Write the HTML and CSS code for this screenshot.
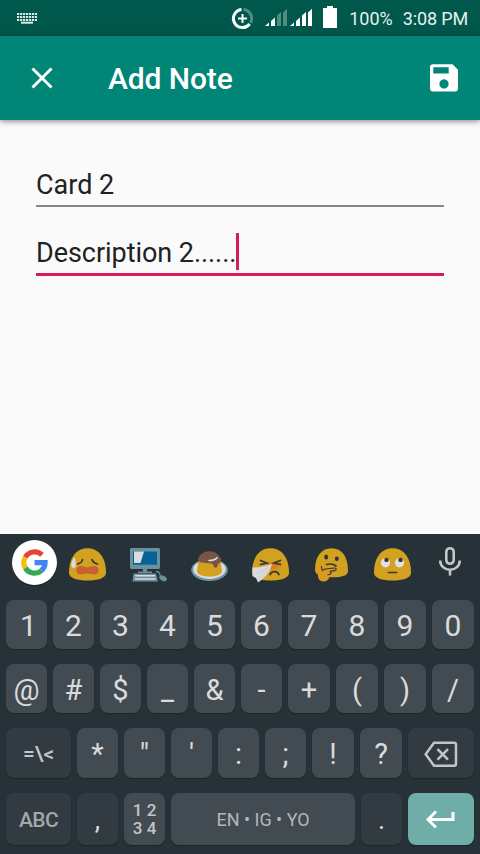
FILE: index.html
```html
<!DOCTYPE html>
<html lang="en">
<head>
<meta charset="utf-8">
<title>Add Note</title>
<link rel="stylesheet" href="styles.css">
</head>
<body>
<div class="screen">
  <div class="status">
    <svg class="status-kbd" width="24" height="14" viewBox="15 11 24 14">
      <path d="M17 14h20M17 17h20M17 20h20" stroke="#dcebe8" stroke-width="2" stroke-dasharray="2.2 .8"/>
      <path d="M21 22.700h12" stroke="#dcebe8" stroke-width="2"/>
    </svg>
    <svg class="status-icons" width="110" height="36" viewBox="230 0 110 36">
      <g fill="none" stroke-width="3">
        <path d="M243.500 9.600A9 9 0 0 1 250.600 22.800" stroke="#4f8d83"/>
        <path d="M241.500 9.600A9 9 0 1 0 249.600 24" stroke="#fff"/>
        <path d="M238 18.500h9M242.500 14v9" stroke="#fff" stroke-width="2"/>
      </g>
      <path fill="#fff" d="M265 26l4-3.500v3.500zM271 26v-5l4-3.500v8.500z"/>
      <path fill="#4f8d83" d="M277 26V15.500l4-3.500v14zM283 26V12.500l4-3.800V26z"/>
      <path fill="#fff" d="M290 26l4-3.500v3.500zM296 26v-5l4-3.500v8.500zM302 26V15.500l4-3.500v14zM308 26V12.500l4-3.800V26z"/>
      <path fill="#fff" d="M323 8h4V6h6v2h4v20h-14z"/>
    </svg>
    <span class="battery">100%</span>
    <span class="clock">3:08 PM</span>
  </div>
  <header class="bar">
    <svg width="22" height="22" viewBox="31 67 22 22"><path d="M32.500 68.500l19 19M51.500 68.500l-19 19" stroke="#fff" stroke-width="2.900"/></svg>
    <h1>Add Note</h1>
    <svg width="28" height="28" viewBox="430 64 28 28"><path fill="#fff" fill-rule="evenodd" d="M433 64.300h19.500l5.500 5.500V88.500a3 3 0 0 1-3 3H433a3 3 0 0 1-3-3V67.300a3 3 0 0 1 3-3zM433.300 67.300v6.200h15.400v-6.200zM444 79.300a4.600 4.600 0 1 0 .01 0z"/></svg>
  </header>
  <main class="form">
    <div class="field">Card 2</div>
    <div class="field active"><span>Description 2......</span><i class="caret"></i></div>
  </main>
  <section class="keyboard">
    <div class="strip">
      <svg width="64" height="66" viewBox="0 534 64 66">
        <ellipse cx="34.500" cy="564" rx="22.500" ry="22.500" fill="#182024" opacity=".6"/>
        <circle cx="34.500" cy="562.500" r="22.500" fill="#fff"/>
        <g fill="none" stroke-width="5.200">
          <path d="M25.300 557.300A10.600 10.600 0 0 1 42 554.900" stroke="#ea4335"/>
          <path d="M25.300 567.900A10.600 10.600 0 0 1 25.300 557.300" stroke="#fbbc05"/>
          <path d="M41.300 570.700A10.600 10.600 0 0 1 25.300 567.900" stroke="#34a853"/>
          <path d="M34.500 562.700H45.100A10.600 10.600 0 0 1 41.300 570.700" stroke="#4285f4"/>
        </g>
      </svg>
      <svg width="56" height="66" viewBox="64 534 56 66">
        <path class="face" d="M69 573C69 558 76 548.300 87.500 548.300S106 558 106 573C106 578 98 580.500 87.500 580.500S69 578 69 573Z"/>
        <path class="line" d="M77.500 564q4.500-1 5-4.500M92 559.500q1 3.500 5.500 4.500"/>
        <path fill="#c9612f" d="M80.500 566c3 0 4.500 1.200 7 1.200s4-1.200 7-1.200c5.500 0 5.500 8.500 0 8.500-3 0-4.500-1-7-1s-4 1-7 1c-5.500 0-5.500-8.500 0-8.500z"/>
        <path fill="#d8dadb" d="M74.500 557c-2 2.500-3.200 5-3.200 8 0 4 4.500 4 4.600 0 0-3-.4-5.500-1.400-8z"/>
      </svg>
      <svg width="60" height="66" viewBox="120 534 60 66">
        <path fill="#6b919d" d="M131.500 548h27q1.500 0 1.500 1.500v18q0 1.500-1.500 1.500H147v2.500h5v1.500h-14v-1.500h5V569h-11.500q-1.500 0-1.500-1.500v-18q0-1.500 1.500-1.500z"/>
        <path fill="#07629a" d="M133 551.500h24v13.200h-24z"/>
        <path fill="#d7dde0" d="M134 551.500h10l-3.500 11.500H134z"/>
        <path fill="#6b919d" d="M133.500 573.500h22.500l2 8h-25.500z"/>
        <path stroke="#d7dde0" stroke-width="1.600" d="M135 575.700h20M135 579h20.500"/>
        <path fill="none" stroke="#6b919d" stroke-width="1.300" d="M156 571.500q4 0 4 4"/>
        <ellipse cx="163" cy="578.300" rx="4" ry="2.500" fill="#6b919d" transform="rotate(28 163 578.300)"/>
      </svg>
      <svg width="60" height="66" viewBox="180 534 60 66">
        <ellipse cx="209.500" cy="570" rx="18.300" ry="11" fill="#6d949e"/>
        <ellipse cx="209.500" cy="569.300" rx="16.300" ry="9.600" fill="#d9dddf"/>
        <path fill="#d2a11f" d="M199 557l-2 14c0 7.500 25 7.500 25 0l-2-14z"/>
        <path fill="#795548" d="M198 560c1-6 6-8.800 11.500-8.800S219.500 554 221 560c.5 3.500-3 2.500-3.200 5-.3 3.500-4 3.500-4.500 0-.3-2-4-1-6.500-1.700-4.500-1.100-9-.8-8.800-3.300z"/>
        <path fill="none" stroke="#e4dedc" stroke-width="1.500" stroke-linecap="round" d="M209 560.500c4 0 6.500-.7 8-2.800"/>
      </svg>
      <svg width="61" height="66" viewBox="240 534 61 66">
        <defs><radialGradient id="blush"><stop offset=".2" stop-color="#d9781c"/><stop offset="1" stop-color="#d2a11f" stop-opacity="0"/></radialGradient></defs>
        <path class="face" d="M252 573C252 558 259 548.300 270.500 548.300S289 558 289 573C289 578 281 580.500 270.500 580.500S252 578 252 573Z"/>
        <ellipse cx="273" cy="566" rx="13" ry="6.500" fill="url(#blush)"/>
        <path class="line" d="M260.500 560.500l6.500 2.500-6.500 1.500M280.500 560.500l-6.500 2.500 6.500 1.500M270 574.500q1.500-3 4.500-3t4.500 3"/>
        <path fill="#d8dadb" d="M272 564c-2 8-7 14-14 18.500l-2-4.500-3.500-2v-8.500c7 .5 14-2 19.500-3.500z"/>
        <path fill="none" stroke="#c3c6c8" stroke-width=".6" d="M269 567l-13 7M269 569l-11 10"/>
      </svg>
      <svg width="61" height="66" viewBox="301 534 61 66">
        <path class="face" d="M315 570C315 557 321 548.300 331.500 548.300S348 557 348 571C348 576 341 577.300 333 577.300S315 576 315 570Z"/>
        <ellipse cx="326.200" cy="557" rx="2" ry="2.500" fill="#343634"/><ellipse cx="336.800" cy="558.800" rx="2" ry="2.200" fill="#343634"/>
        <path class="line" d="M326.500 564.500q6-1.500 9.500 1.500"/>
        <path d="M318.500 565.500c1.500-1.500 2.600-.5 3 1.500l.8 3.500 3-1.500 9-1c2.500-.2 2.500 2.300.5 2.600l-5 .8c2 .6 1.700 2.600-.3 3 .3 4-2 7-5.500 7-5 0-6-3-6.200-7.500z" fill="#d99a22"/>
        <path d="M321.300 566l1 4.500 3-1.500 9-1c2.500-.2 2.500 2.300.5 2.600l-5 .8c2 .6 1.700 2.600-.3 3l-2 .3" fill="none" stroke="#343634" stroke-width="1.100"/>
      </svg>
      <svg width="61" height="66" viewBox="362 534 61 66">
        <path class="face" d="M374 573C374 558 381 548.300 392.500 548.300S411 558 411 573C411 578 403 580.500 392.500 580.500S374 578 374 573Z"/>
        <circle cx="385.500" cy="562.800" r="4.600" fill="#e0e1e2"/><circle cx="399.500" cy="562.800" r="4.600" fill="#e0e1e2"/>
        <circle cx="386.500" cy="559.900" r="2.200" fill="#343634"/><circle cx="400.500" cy="559.900" r="2.200" fill="#343634"/>
        <path class="line" d="M388.500 572.500h8"/>
      </svg>
      <svg width="57" height="66" viewBox="423 534 57 66">
        <g fill="none" stroke="#c2c6c8"><rect x="446.300" y="548.200" width="7.400" height="15.600" rx="3.700" stroke-width="2.600"/><path d="M440.200 560.500a9.800 9.300 0 0 0 19.600 0M450 569.500v6" stroke-width="2.600"/></g>
      </svg>
    </div>
    <div class="keys row-ten">
      <b class="one">1</b><b>2</b><b>3</b><b>4</b><b>5</b><b>6</b><b>7</b><b>8</b><b>9</b><b>0</b>
    </div>
    <div class="keys row-ten symbols">
      <b>@</b><b>#</b><b>$</b><b>_</b><b>&amp;</b><b>-</b><b>+</b><b>(</b><b>)</b><b>/</b>
    </div>
    <div class="keys row-nine">
      <b class="dark more">=\&lt;</b><b>*</b><b>"</b><b>'</b><b>:</b><b>;</b><b>!</b><b>?</b>
      <b class="dark"><svg width="34" height="28" viewBox="424 740 34 28"><path fill="none" stroke="#c2c6c8" stroke-width="2.500" d="M434 742.700h20q2 0 2 2v19q0 2-2 2h-20l-8.300-11.500zM437.500 749.200l10.500 10.500M448 749.200l-10.500 10.500"/></svg></b>
    </div>
    <div class="keys row-six">
      <b class="dark abc">ABC</b><b class="dark punct">,</b>
      <b class="numpad"><span>1</span><span>2</span><span>3</span><span>4</span></b>
      <b class="space">EN • IG • YO</b><b class="dark punct">.</b>
      <b class="enter"><svg width="32" height="20" viewBox="425 811 32 20"><path fill="none" stroke="#fff" stroke-width="3" d="M453 813v7.500h-25M436 812.500l-8 8 8 8"/></svg></b>
    </div>
  </section>
</div>
</body>
</html>
```
FILE: styles.css
```css
* { box-sizing: border-box; }
body { margin: 0; font-family: Roboto, "Liberation Sans", sans-serif; }
svg { display: block; flex: none; }
.screen { width: 480px; height: 854px; display: flex; flex-direction: column; background: #fafafa; overflow: hidden; }
.status { height: 36px; flex: none; display: flex; align-items: center; background: #00574b; color: #e6f0ee; font-size: 18px; white-space: nowrap; padding: 0 12px 0 15px; }
.status-icons { margin-left: auto; }
.battery { margin-left: 9px; padding-top: 1px; }
.clock { margin-left: 10px; padding-top: 1px; letter-spacing: -.15px; }
.bar { height: 84px; flex: none; display: flex; align-items: center; background: #008577; padding: 0 22px 0 31px; box-shadow: 0 1px 6px rgba(0,0,0,.5); color: #fff; }
.bar h1 { margin: 2px auto 0 55px; font-size: 30px; line-height: 36px; font-weight: 500; letter-spacing: -.1px; }
.form { flex: 1; padding: 46px 36px 0; color: #212121; font-size: 27px; }
.field { height: 41px; line-height: 39px; border-bottom: 2px solid #868686; white-space: nowrap; }
.active { height: 43px; margin-top: 26px; border-bottom: 3px solid #d81b60; display: flex; }
.active span { line-height: 41px; letter-spacing: -.05px; }
.caret { width: 3px; height: 37px; background: #d81b60; }
.keyboard { height: 320px; flex: none; background: #263238; }
.strip { display: flex; height: 66px; }
.face { fill: #d2a11f; }
.line { fill: none; stroke: #343634; stroke-width: 1.7; stroke-linecap: round; }
.keys { display: grid; gap: 6px; padding: 0 6px; height: 49px; margin-bottom: 15px; }
.row-ten { grid-template-columns: repeat(6, 41px) repeat(4, 42px); }
.row-nine { grid-template-columns: 65px repeat(5, 41px) 42px 42px 66px; height: 50px; }
.row-six { grid-template-columns: 65px 41px 41px 184px 41px 66px; height: 52px; }
.keys b { display: flex; align-items: center; justify-content: center; padding-top: 2px; background: #434b52; border-radius: 8px; color: #d9dbdc; font-size: 30px; line-height: 36px; font-weight: 400; box-shadow: 0 1px 1px #1b2529; }
.keys .one { padding-left: 4px; }
.symbols b, .row-nine b { font-size: 29px; }
.keys .dark { background: #313b41; }
.keys .more { font-size: 21px; font-weight: 500; color: #c2c6c8; }
.keys .abc { font-size: 21px; font-weight: 500; letter-spacing: -.6px; color: #a3a8aa; }
.keys .punct { font-size: 27px; }
.keys .numpad { display: grid; grid-template-columns: 11px 11px; grid-template-rows: 16px 16px; gap: 2px 3px; padding: 0; justify-content: center; align-content: center; text-align: center; font-size: 17px; line-height: 16px; font-weight: 500; color: #c2c6c8; }
.keys .space { font-size: 18px; color: #b3b7ba; }
.keys .enter { background: #6faea8; }
```
